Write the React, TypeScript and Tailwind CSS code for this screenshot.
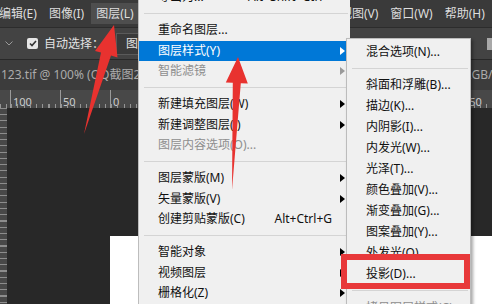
import React from 'react';

type Item =
  | { sep: true }
  | { sep?: false; label: string; shortcut?: string; arrow?: boolean; active?: boolean; disabled?: boolean };

const LAYER_MENU: Item[] = [
  { label: '导出为...', shortcut: "Alt+Shift+Ctrl+'" },
  { sep: true },
  { label: '重命名图层...' },
  { label: '图层样式(Y)', arrow: true, active: true },
  { label: '智能滤镜', arrow: true, disabled: true },
  { sep: true },
  { label: '新建填充图层(W)', arrow: true },
  { label: '新建调整图层(J)', arrow: true },
  { label: '图层内容选项(O)...', disabled: true },
  { sep: true },
  { label: '图层蒙版(M)', arrow: true },
  { label: '矢量蒙版(V)', arrow: true },
  { label: '创建剪贴蒙版(C)', shortcut: 'Alt+Ctrl+G' },
  { sep: true },
  { label: '智能对象', arrow: true },
  { label: '视频图层', arrow: true },
  { label: '栅格化(Z)', arrow: true },
];

const STYLE_MENU: Item[] = [
  { label: '混合选项(N)...' },
  { sep: true },
  { label: '斜面和浮雕(B)...' },
  { label: '描边(K)...' },
  { label: '内阴影(I)...' },
  { label: '内发光(W)...' },
  { label: '光泽(T)...' },
  { label: '颜色叠加(V)...' },
  { label: '渐变叠加(G)...' },
  { label: '图案叠加(Y)...' },
  { label: '外发光(O)...' },
  { label: '投影(D)...' },
  { sep: true },
  { label: '拷贝图层样式(C)', disabled: true },
];

const MENUBAR = ['编辑(E)', '图像(I)', '图层(L)', '类型(Y)', '选择(S)', '滤镜(T)', '3D(D)', '视图(V)', '窗口(W)', '帮助(H)'];
// only the labels that are not under the menus
const RULER = ['100', '50', '0', '', '', '', '', '', '', '350'];

function Caret({ color }: { color: string }) {
  return (
    <svg width="5" height="8" viewBox="0 0 5 8" className="shrink-0">
      <polygon points="0,0 5,4 0,8" fill={color} />
    </svg>
  );
}

/** Windows-style popup menu rows. */
function MenuRows({ items, rowH, pl }: { items: Item[]; rowH: string; pl: string }) {
  return (
    <>
      {items.map((it, i) =>
        it.sep ? (
          <div key={i} className="flex h-[12.5px] items-center pl-[5px] pr-[2px]">
            <div className="h-px w-full bg-[#d4d4d4]" />
          </div>
        ) : (
          <div
            key={i}
            className={`flex items-center pr-[5px] ${rowH} ${pl} ${
              it.active ? 'bg-[#0078d7] text-white' : it.disabled ? 'text-[#8e8e8e]' : 'text-[#111]'
            }`}
          >
            <span className="whitespace-nowrap leading-none">{it.label}</span>
            <span className="flex-1" />
            {it.shortcut && <span className="mr-[13px] whitespace-nowrap leading-none">{it.shortcut}</span>}
            {it.arrow && <Caret color={it.active ? '#fff' : it.disabled ? '#9a9a9a' : '#000'} />}
          </div>
        ),
      )}
    </>
  );
}

export default function App() {
  return (
    <div className="relative h-[304px] w-[492px] overflow-hidden bg-[#282828] text-[12px] [font-family:'Noto_Sans','Noto_Sans_CJK_SC',sans-serif]">
      {/* menubar */}
      <div className="-ml-[6px] flex h-[27px] items-center gap-[2px] bg-[#3a3a3a] text-[#dedede]">
        {MENUBAR.map((m) => (
          <span
            key={m}
            className={`flex h-[21px] items-center whitespace-nowrap px-[5px] leading-none ${
              m === '图层(L)' ? 'bg-[#4e4e4e]' : ''
            } ${m === '视图(V)' ? 'ml-[1px]' : ''}`}
          >
            {m}
          </span>
        ))}
      </div>

      {/* options bar */}
      <div className="flex h-[32px] items-center border-t border-[#2c2c2c] bg-[#434343] text-[#e2e2e2]">
        <svg width="8" height="5" viewBox="0 0 8 5" className="ml-[5px]">
          <polyline points="0.5,0.5 4,4 7.5,0.5" fill="none" stroke="#9a9a9a" strokeWidth="1" />
        </svg>
        <span className="ml-[14px] flex h-[11px] w-[11px] items-center justify-center rounded-[2px] bg-[#e6e6e6]">
          <svg width="8" height="7" viewBox="0 0 8 7">
            <polyline points="1,3.5 3,5.5 7,1" fill="none" stroke="#333" strokeWidth="1.6" />
          </svg>
        </span>
        <span className="ml-[6px] whitespace-nowrap leading-none">自动选择：</span>
        <span className="ml-[12px] flex h-[22px] w-[90px] items-center border border-[#5a5a5a] bg-[#3a3a3a] pl-[9px] leading-none">
          图层
        </span>
        <span className="ml-auto h-[12px] w-[5px] bg-[#a8a8a8]" />
      </div>

      {/* document tab */}
      <div className="mt-px flex h-[30px] items-center bg-[#3c3c3c] pl-[1px] text-[#ababab]">
        <span className="whitespace-nowrap leading-none">123.tif @ 100% (QQ截图20190712</span>
        <span className="ml-auto mr-[-11px] whitespace-nowrap leading-none">(RGB/8)</span>
      </div>

      {/* horizontal ruler */}
      <div className="flex h-[18px] bg-[#484848]">
        <div className="mt-auto h-[4px] w-[10px] shrink-0 bg-[repeating-linear-gradient(to_right,#959595_0_1px,transparent_1px_6.25px)]" />
        {RULER.map((n, i) => (
          <div key={i} className="flex w-[50px] shrink-0 flex-col border-l border-[#9a9a9a]">
            <span className="h-[11px] pl-[2px] pt-[6px] text-[11px] leading-none text-[#cdcdcd]">{n}</span>
            <div className="mt-auto h-[4px] bg-[repeating-linear-gradient(to_right,#959595_0_1px,transparent_1px_6.25px)]" />
          </div>
        ))}
      </div>

      {/* canvas */}
      <div className="flex h-[196px]">
        <div className="w-[7px] shrink-0 bg-[#484848] bg-[repeating-linear-gradient(to_bottom,#8c8c8c_0_1px,transparent_1px_6.25px)]" />
        <div className="flex flex-1 flex-col pl-[103px] pt-[128px]">
          <div className="flex-1 bg-white" />
        </div>
      </div>

      {/* 图层 menu */}
      <div className="absolute left-[138px] top-[-13px] w-[212px] border-l border-[#bdbdbd] bg-[#f0f0f0]">
        <MenuRows items={LAYER_MENU} rowH="h-[20.5px]" pl="pl-[19px]" />
      </div>

      {/* 图层样式 submenu */}
      <div className="absolute left-[346px] top-[38px] w-[125px] border border-[#bcbcbc] bg-[#f0f0f0] pt-[2px] pb-[4px] shadow-[2px_2px_3px_rgba(0,0,0,0.35)]">
        <MenuRows items={STYLE_MENU} rowH="h-[21px]" pl="pl-[19px]" />
      </div>

      {/* annotations */}
      <div className="absolute left-[341px] top-[254px] h-[35px] w-[129px] border-[6px] border-[#e8383a]" />
      <svg className="pointer-events-none absolute left-0 top-0" width="492" height="304" viewBox="0 0 492 304">
        <polygon points="114,25 117.5,57.5 111,55.5 84,134 101,52.5 95,51" fill="#e8322f" />
        <polygon points="238,57 247.8,83.5 240.8,83.2 232,190 232.8,82.8 225.8,82.5" fill="#e8322f" />
      </svg>
    </div>
  );
}
